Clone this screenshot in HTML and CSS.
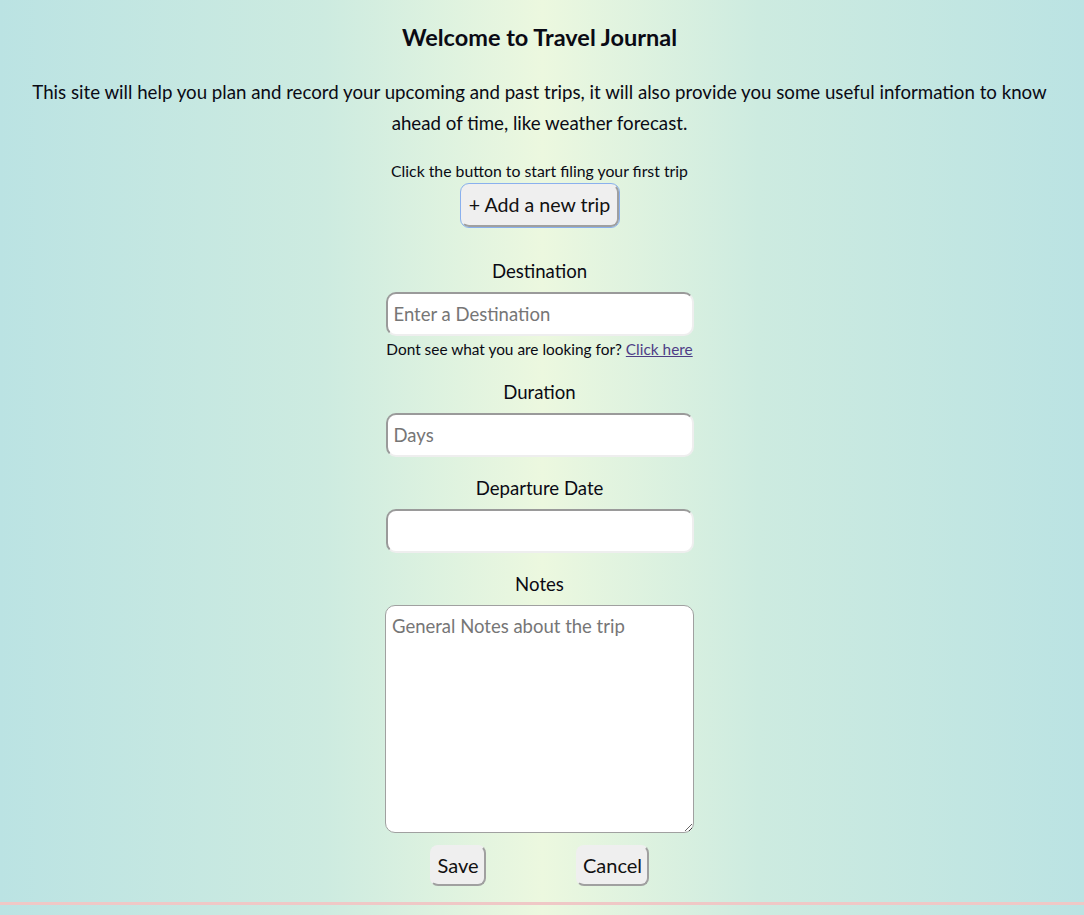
FILE: index.html
```html
<!DOCTYPE html>
<html lang="en">
<head>
<meta charset="utf-8">
<title>Travel Journal</title>
<link rel="stylesheet" href="styles.css">
</head>
<body>
<main class="page">
  <h1 class="title">Welcome to Travel Journal</h1>
  <p class="intro">This site will help you plan and record your upcoming and past trips, it will also provide you some useful information to know ahead of time, like weather forecast.</p>
  <p class="hint-start">Click the button to start filing your first trip</p>
  <button class="btn btn-add" type="button">+ Add a new trip</button>

  <form class="trip-form">
    <label class="field-label" for="dest">Destination</label>
    <input class="field-input" id="dest" type="text" placeholder="Enter a Destination">
    <p class="field-hint">Dont see what you are looking for? <a class="hint-link" href="#">Click here</a></p>

    <label class="field-label label-duration" for="days">Duration</label>
    <input class="field-input" id="days" type="text" placeholder="Days">

    <label class="field-label label-gap" for="date">Departure Date</label>
    <input class="field-input" id="date" type="text">

    <label class="field-label label-gap" for="notes">Notes</label>
    <textarea class="field-notes" id="notes" placeholder="General Notes about the trip"></textarea>

    <div class="actions">
      <button class="btn btn-save" type="button">Save</button>
      <button class="btn btn-cancel" type="button">Cancel</button>
    </div>
  </form>
</main>
<hr class="divider">
</body>
</html>
```
FILE: styles.css
```css
html, body {
  margin: 0;
  padding: 0;
}
body {
  min-height: 915px;
  background: linear-gradient(to right, #bbe3e3 0%, #cdebe0 30%, #ecf8df 50%, #cdebe0 70%, #bbe3e3 100%);
  font-family: "Lato", "Open Sans", sans-serif;
  color: #0a0a14;
  overflow: hidden;
}
.page {
  display: flex;
  flex-direction: column;
  align-items: center;
  text-align: center;
  padding: 0 13px 0 8px;
}
.title {
  margin: 22px 0 0;
  font-family: "Lato", sans-serif;
  font-weight: 700;
  font-size: 23.5px;
  line-height: 30px;
}
.intro {
  margin: 25px 0 0;
  max-width: 1022px;
  font-size: 18.7px;
  line-height: 31px;
}
.hint-start {
  margin: 22px 0 0;
  font-size: 15.8px;
  line-height: 20px;
}
.btn {
  font-family: "Lato", sans-serif;
  font-size: 20px;
  color: #111;
  background: #efefef;
  border: 2px solid;
  border-color: #efefef #a0a0a0 #a0a0a0 #efefef;
  border-radius: 8px;
  padding: 0 0 2px;
  height: 43px;
  white-space: nowrap;
  cursor: pointer;
}
.btn-add {
  margin-top: 3px;
  width: 158px;
  font-size: 19.6px;
  outline: 1px solid #8ab0ee;
  outline-offset: 0;
}
.trip-form {
  display: flex;
  flex-direction: column;
  align-items: center;
  margin-top: 33px;
}
.field-label {
  font-size: 18.6px;
  line-height: 22px;
}
.label-duration {
  margin-top: 22px;
}
.label-gap {
  margin-top: 20px;
}
.field-input {
  box-sizing: border-box;
  margin-top: 10px;
  width: 308px;
  height: 44px;
  padding: 0 6px;
  font-family: "Lato", sans-serif;
  font-size: 18.5px;
  background: #fff;
  border: 2px solid;
  border-color: #9a9a9a #eeeeee #eeeeee #9a9a9a;
  border-radius: 10px;
  outline: none;
}
.field-input::placeholder,
.field-notes::placeholder {
  color: #767676;
}
.field-hint {
  margin: 3px 0 0;
  font-size: 15.4px;
  line-height: 20px;
}
.hint-link {
  color: #4e3d86;
}
.field-notes {
  box-sizing: border-box;
  margin-top: 10px;
  width: 309px;
  height: 228px;
  padding: 9px 6px;
  font-family: "Lato", sans-serif;
  font-size: 18.5px;
  background: #fff;
  border: 1px solid #a0a0a0;
  border-radius: 10px;
  resize: both;
  outline: none;
}
.actions {
  display: flex;
  justify-content: center;
  gap: 90px;
  margin-top: 12px;
}
.btn-save {
  width: 56px;
  height: 41px;
}
.btn-cancel {
  width: 73px;
  height: 41px;
}
.divider {
  margin: 16px 0 0;
  height: 3px;
  border: 0;
  background: #efc8c6;
}
```
